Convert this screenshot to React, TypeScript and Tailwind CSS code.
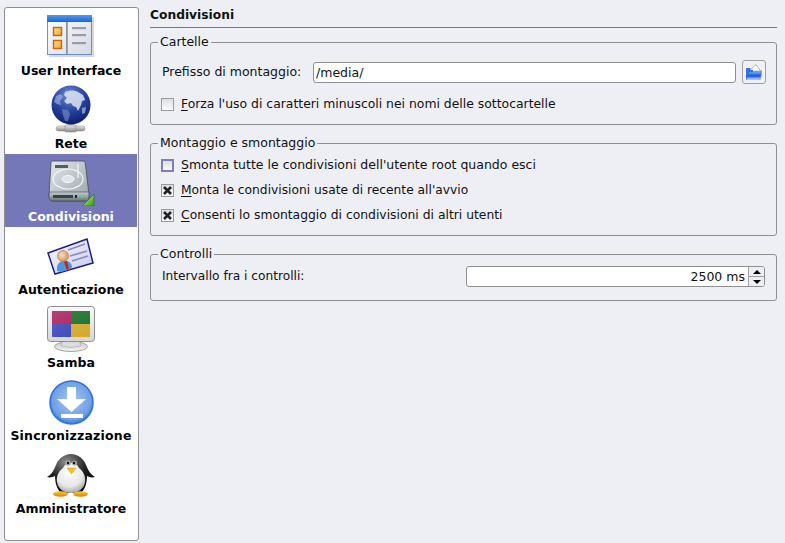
import React from 'react';

const UiIcon = () => (
  <svg width="48" height="48" viewBox="0 0 48 48">
    <defs>
      <linearGradient id="uiBar" x1="0" y1="0" x2="0" y2="1">
        <stop offset="0" stopColor="#4f9bec" />
        <stop offset="1" stopColor="#1c63d8" />
      </linearGradient>
      <linearGradient id="uiBody" x1="0" y1="0" x2="1" y2="1">
        <stop offset="0" stopColor="#ffffff" />
        <stop offset="1" stopColor="#d3d8e6" />
      </linearGradient>
      <linearGradient id="uiBox" x1="0" y1="0" x2="1" y2="1">
        <stop offset="0" stopColor="#fde08a" />
        <stop offset="1" stopColor="#f2a52c" />
      </linearGradient>
    </defs>
    <rect x="2" y="5" width="45" height="40" fill="#8a8fa0" opacity="0.35" />
    <rect x="0.500" y="3.500" width="44" height="39" fill="url(#uiBody)" stroke="#4f78c8" strokeWidth="0.8" />
    <rect x="0" y="3" width="45" height="7" fill="url(#uiBar)" />
    <rect x="6.500" y="15.500" width="8" height="8" fill="url(#uiBox)" stroke="#c9650e" strokeWidth="1.400" />
    <rect x="6.500" y="28.500" width="8" height="8" fill="url(#uiBox)" stroke="#c9650e" strokeWidth="1.400" />
    <rect x="19" y="10" width="1.800" height="32" fill="#8f939c" />
    <rect x="25" y="15" width="14" height="2.200" fill="#9a9ca4" />
    <rect x="25" y="22" width="14" height="2.200" fill="#9a9ca4" />
    <rect x="25" y="30" width="14" height="2.200" fill="#9a9ca4" />
  </svg>
);

const GlobeIcon = () => (
  <svg width="48" height="48" viewBox="0 0 48 48">
    <defs>
      <radialGradient id="globe" cx="0.45" cy="0.25" r="0.8">
        <stop offset="0" stopColor="#6f8fd8" />
        <stop offset="0.5" stopColor="#2744a0" />
        <stop offset="1" stopColor="#0b1868" />
      </radialGradient>
      <linearGradient id="pipe" x1="0" y1="0" x2="0" y2="1">
        <stop offset="0" stopColor="#e8e8e8" />
        <stop offset="1" stopColor="#8a8a8a" />
      </linearGradient>
    </defs>
    <rect x="21" y="34" width="6" height="9" fill="url(#pipe)" stroke="#8a8a8a" strokeWidth="0.5" />
    <rect x="9" y="41" width="29" height="5" rx="2.500" fill="url(#pipe)" stroke="#8a8a8a" strokeWidth="0.5" />
    <rect x="18" y="40" width="11" height="7" rx="1" fill="url(#pipe)" stroke="#7a7a7a" strokeWidth="0.5" />
    <circle cx="24" cy="20" r="19.500" fill="url(#globe)" />
    <path d="M18 7c4-2 10-2 13 0l5 3 2 5-3 1-1 4-3 6-2-4-3-1-2-3-4 1-3-3 3-3-3-3z" fill="#d6dded" opacity="0.9" />
    <path d="M9 11l5-2 2 3-3 4 1 4-4-1-3-2z" fill="#b9c6e4" opacity="0.55" />
    <path d="M15 24l6 1 2 4-2 7-3 0-2-6z" fill="#9fb0dc" opacity="0.45" />
    <path d="M35 23l4-1-1 6-3 1z" fill="#c6d0e8" opacity="0.6" />
  </svg>
);

const DiskIcon = () => (
  <svg width="48" height="48" viewBox="0 0 48 48">
    <defs>
      <linearGradient id="hd" x1="0" y1="0" x2="1" y2="1">
        <stop offset="0" stopColor="#e4e8ea" />
        <stop offset="1" stopColor="#98a3aa" />
      </linearGradient>
      <linearGradient id="hdFront" x1="0" y1="0" x2="0" y2="1">
        <stop offset="0" stopColor="#c6ced3" />
        <stop offset="1" stopColor="#69747c" />
      </linearGradient>
      <linearGradient id="share" x1="0" y1="0" x2="1" y2="1">
        <stop offset="0" stopColor="#d4f78f" />
        <stop offset="1" stopColor="#2f9a12" />
      </linearGradient>
    </defs>
    <path d="M5 3h31q2 0 2.300 2L42 37q0 6-3 6H5q-3 0-3-6L4 5q0-2 1-2z" fill="url(#hd)" stroke="#454c53" strokeWidth="0.8" />
    <path d="M2.500 34h39.300l.2 3q0 6-3 6H5q-3 0-3-6z" fill="url(#hdFront)" stroke="#3e454c" strokeWidth="0.6" />
    <rect x="8" y="7" width="13" height="3" fill="#555d64" />
    <ellipse cx="21" cy="21" rx="15" ry="10" fill="none" stroke="#f4f6f8" strokeWidth="1.200" />
    <ellipse cx="21" cy="21" rx="6" ry="3.500" fill="#dfe4e8" stroke="#f8f9fa" strokeWidth="1" />
    <path d="M31 6v14" stroke="#f0f2f4" strokeWidth="1.400" />
    <rect x="6" y="37" width="20" height="3" fill="#3a4248" />
    <rect x="28" y="37" width="2" height="3" fill="#222" />
    <circle cx="35" cy="38.500" r="1.200" fill="#58e05a" />
    <path d="M47 36v12H35z" fill="url(#share)" stroke="#1c6e0c" strokeWidth="0.6" />
  </svg>
);

const CardIcon = () => (
  <svg width="48" height="48" viewBox="0 0 48 48">
    <defs>
      <linearGradient id="card" x1="0" y1="0" x2="1" y2="1">
        <stop offset="0" stopColor="#f8f9ff" />
        <stop offset="1" stopColor="#c7c9ec" />
      </linearGradient>
      <radialGradient id="face" cx="0.4" cy="0.4" r="0.7">
        <stop offset="0" stopColor="#fbe0b8" />
        <stop offset="1" stopColor="#d18b4d" />
      </radialGradient>
    </defs>
    <path d="M1 22L40 8l6 24-38 11z" fill="url(#card)" stroke="#1e1e8e" strokeWidth="1.500" />
    <path d="M21 19l17-6M23 25l17-5M25 30l16-5" stroke="#8a8bb8" strokeWidth="1.700" />
    <path d="M10 40q-1-9 6-10t9 5q0 3-4 4l-7 2z" fill="#4f94e0" />
    <circle cx="16" cy="25" r="5.500" fill="url(#face)" stroke="#a0672f" strokeWidth="0.5" />
    <path d="M17 31l3-1 2 8-2 1z" fill="#c8201e" />
  </svg>
);

const MonitorIcon = () => (
  <svg width="48" height="48" viewBox="0 0 48 48">
    <defs>
      <linearGradient id="mon" x1="0" y1="0" x2="0" y2="1">
        <stop offset="0" stopColor="#f8f8f8" />
        <stop offset="1" stopColor="#d6d6d6" />
      </linearGradient>
      <linearGradient id="stand" x1="0" y1="0" x2="0" y2="1">
        <stop offset="0" stopColor="#c9c9c9" />
        <stop offset="1" stopColor="#f5f5f5" />
      </linearGradient>
      <linearGradient id="gloss" x1="0" y1="0" x2="1" y2="1">
        <stop offset="0" stopColor="#ffffff" stopOpacity="0.15" />
        <stop offset="1" stopColor="#ffffff" stopOpacity="0" />
      </linearGradient>
    </defs>
    <ellipse cx="24" cy="42.500" rx="16.500" ry="5" fill="url(#stand)" stroke="#8f8f8f" strokeWidth="0.8" />
    <path d="M16 36h16l2 6q-10 3-20 0z" fill="#dcdcdc" stroke="#9a9a9a" strokeWidth="0.5" />
    <rect x="0.500" y="2.500" width="47" height="35" rx="3" fill="url(#mon)" stroke="#8f8f8f" />
    <rect x="5" y="7" width="19" height="13" fill="#a81f5c" />
    <rect x="24" y="7" width="19" height="13" fill="#1c7028" />
    <rect x="5" y="20" width="19" height="13" fill="#3a47b8" />
    <rect x="24" y="20" width="19" height="13" fill="#d3aa2c" />
    <rect x="5" y="7" width="38" height="26" fill="url(#gloss)" />
  </svg>
);

const SyncIcon = () => (
  <svg width="48" height="48" viewBox="0 0 48 48">
    <defs>
      <radialGradient id="syncRing" cx="0.5" cy="0.45" r="0.6">
        <stop offset="0" stopColor="#a9c6f0" />
        <stop offset="0.75" stopColor="#6f9fe6" />
        <stop offset="1" stopColor="#1f5fd8" />
      </radialGradient>
    </defs>
    <circle cx="24.500" cy="25.500" r="21.500" fill="url(#syncRing)" stroke="#2b6fdc" strokeWidth="1.500" />
    <path d="M20 10h9v12h10L24.500 35 10 22h10z" fill="#ffffff" />
    <rect x="14" y="37" width="22" height="4" fill="#ffffff" />
  </svg>
);

const PenguinIcon = () => (
  <svg width="48" height="48" viewBox="0 0 48 48">
    <defs>
      <radialGradient id="belly" cx="0.45" cy="0.3" r="0.75">
        <stop offset="0" stopColor="#ffffff" />
        <stop offset="0.65" stopColor="#e6e6e6" />
        <stop offset="1" stopColor="#9c9c9c" />
      </radialGradient>
      <radialGradient id="head" cx="0.4" cy="0.2" r="0.7">
        <stop offset="0" stopColor="#8c8c8c" />
        <stop offset="0.6" stopColor="#222222" />
        <stop offset="1" stopColor="#0c0c0c" />
      </radialGradient>
      <linearGradient id="feet" x1="0" y1="0" x2="0" y2="1">
        <stop offset="0" stopColor="#f7d22b" />
        <stop offset="1" stopColor="#e07a12" />
      </linearGradient>
    </defs>
    <path d="M0 27c4-2 7-7 9-12 2-6 8-11 15-11s13 5 15 11c2 5 5 10 9 12-3 1-6 0-8-1 0 7-2 13-6 17H14c-4-4-6-10-6-17-2 1-5 2-8 1z" fill="url(#head)" />
    <path d="M24 13c3-1 6 1 8 5 4 3 7 8 6 14-1 7-7 11-14 11s-13-4-14-11c-1-6 2-11 6-14 2-4 5-6 8-5z" fill="url(#belly)" />
    <ellipse cx="21" cy="13" rx="3" ry="2.500" fill="#a8a8a8" />
    <ellipse cx="27.500" cy="13" rx="2.500" ry="2.500" fill="#a8a8a8" />
    <circle cx="21" cy="13" r="1.200" fill="#111" />
    <circle cx="27" cy="13" r="1.200" fill="#111" />
    <path d="M20 18h9l-4.500 6z" fill="#f4c31e" stroke="#c98a10" strokeWidth="0.4" />
    <ellipse cx="13.500" cy="44" rx="7.500" ry="2.800" fill="url(#feet)" />
    <ellipse cx="33.500" cy="44" rx="7.500" ry="2.800" fill="url(#feet)" />
  </svg>
);

const FolderIcon = () => (
  <svg width="16" height="16" viewBox="0 0 16 16">
    <defs>
      <linearGradient id="folder" x1="0" y1="0" x2="0" y2="1">
        <stop offset="0" stopColor="#8cc0fa" />
        <stop offset="0.55" stopColor="#1450e8" />
        <stop offset="1" stopColor="#e6eefb" />
      </linearGradient>
    </defs>
    <path d="M3 7l7-6.500 5 7z" fill="#ffffff" stroke="#7f9ad0" strokeWidth="0.7" />
    <path d="M0 4h4l1 2h2v10H0z" fill="#2f74e8" />
    <path d="M3 8l13-1-2 9H0z" fill="url(#folder)" stroke="#2a58c8" strokeWidth="0.4" />
  </svg>
);

const items = [
  { label: 'User Interface', icon: UiIcon },
  { label: 'Rete', icon: GlobeIcon },
  { label: 'Condivisioni', icon: DiskIcon, active: true },
  { label: 'Autenticazione', icon: CardIcon },
  { label: 'Samba', icon: MonitorIcon },
  { label: 'Sincronizzazione', icon: SyncIcon, wide: true },
  { label: 'Amministratore', icon: PenguinIcon },
];

const Group = ({ title, className, children }: { title: string; className: string; children: React.ReactNode }) => (
  <fieldset className={`border border-[#8f8f8f] rounded-[3px] min-w-0 ${className}`}>
    <legend className="-ml-[4px] px-[2px] text-[12.5px] leading-[14px]">{title}</legend>
    {children}
  </fieldset>
);

const Check = ({ letter, rest, state, size }: { letter: string; rest: string; state: 'off' | 'on' | 'hover'; size: string }) => (
  <label className="flex items-center gap-[7px] h-[14px] -ml-px">
    <span
      className={`w-[13px] h-[13px] flex items-center justify-center bg-gradient-to-b from-[#dddee4] to-[#fbfbfc] ${
        state === 'hover' ? 'border-2 border-[#7b80b8]' : 'border border-[#9a9a9a]'
      }`}
    >
      {state === 'on' && (
        <svg width="9" height="9" viewBox="0 0 9 9">
          <path d="M1 1l7 7M8 1L1 8" stroke="#222" strokeWidth="2.600" />
        </svg>
      )}
    </span>
    <span className={`${size} leading-[14px]`}>
      <span className="underline underline-offset-2">{letter}</span>
      {rest}
    </span>
  </label>
);

export default function App() {
  return (
    <div className="w-[785px] h-[543px] overflow-hidden flex bg-[#eeeff4] text-[#111] font-['DejaVu_Sans',sans-serif] pt-[7px] pb-[2px] pl-[4px] pr-[8px]">
      {/* Sidebar */}
      <aside className="w-[135px] shrink-0 bg-white border border-[#8f8f8f] rounded-[3px] pr-px">
        <ul>
          {items.map((item) => (
            <li
              key={item.label}
              className={`h-[73px] flex flex-col items-center justify-end pb-[3px] gap-[4px] ${
                item.active ? 'bg-[#7478b8] text-white' : 'text-black'
              }`}
            >
              <item.icon />
              <span
                className={`text-[12.5px] leading-[14px] font-bold whitespace-nowrap ${
                  item.wide ? 'tracking-[0.2px]' : ''
                }`}
              >
                {item.label}
              </span>
            </li>
          ))}
        </ul>
      </aside>

      {/* Main panel */}
      <main className="flex-1 ml-[11px] min-w-0">
        <h1 className="text-[12.25px] leading-[14px] font-bold pt-px pb-[5px] border-b border-[#777] h-[21px]">Condivisioni</h1>

        <Group title="Cartelle" className="mt-[7px] h-[90px] px-[11px] pt-[11px]">
          <div className="flex items-center h-[24px]">
            <span className="text-[12.5px] w-[151px] shrink-0">Prefisso di montaggio:</span>
            <input
              readOnly
              value="/media/"
              className="flex-1 min-w-0 h-[21px] px-[2px] bg-white border border-[#8f8f8f] rounded-[3px] text-[12.5px] outline-none"
            />
            <button className="ml-[6px] -mr-px w-[24px] h-[24px] flex items-center justify-center border border-[#a0a0a0] rounded-[3px] bg-[#f0f1f5]">
              <FolderIcon />
            </button>
          </div>
          <div className="mt-[13px]">
            <Check size="text-[12.4px]" state="off" letter="F" rest="orza l'uso di caratteri minuscoli nei nomi delle sottocartelle" />
          </div>
        </Group>

        <Group title="Montaggio e smontaggio" className="mt-[11px] h-[100px] px-[11px] pt-[8px] flex flex-col gap-[11px]">
          <Check size="text-[12.5px]" state="hover" letter="S" rest="monta tutte le condivisioni dell'utente root quando esci" />
          <Check size="text-[12.25px]" state="on" letter="M" rest="onta le condivisioni usate di recente all'avvio" />
          <Check size="text-[12.35px]" state="on" letter="C" rest="onsenti lo smontaggio di condivisioni di altri utenti" />
        </Group>

        <Group title="Controlli" className="mt-[11px] h-[54px] pl-[11px] pr-[11px] pt-[5px]">
          <div className="flex items-center justify-between h-[21px]">
            <span className="text-[12.2px]">Intervallo fra i controlli:</span>
            <div className="w-[299px] h-[21px] flex bg-white border border-[#8f8f8f] rounded-[3px] overflow-hidden">
              <span className="flex-1 text-right text-[12.5px] leading-[19px] pr-[3px]">2500 ms</span>
              <div className="w-[16px] flex flex-col border-l border-[#a0a0a0] bg-[#eeeff4]">
                <div className="flex-1 flex items-center justify-center border-b border-[#a0a0a0]">
                  <span className="w-0 h-0 border-x-[4px] border-x-transparent border-b-[4px] border-b-black" />
                </div>
                <div className="flex-1 flex items-center justify-center">
                  <span className="w-0 h-0 border-x-[4px] border-x-transparent border-t-[4px] border-t-black" />
                </div>
              </div>
            </div>
          </div>
        </Group>
      </main>
    </div>
  );
}
